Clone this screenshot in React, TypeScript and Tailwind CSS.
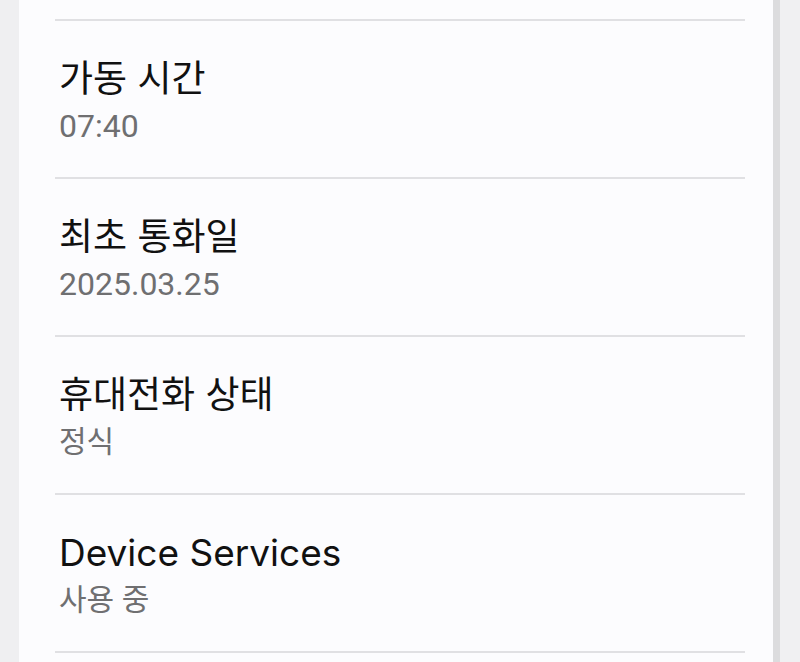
const rows = [
  { title: '가동 시간', value: '07:40', size: 'text-[32px]' },
  { title: '최초 통화일', value: '2025.03.25', size: 'text-[32px]' },
  { title: '휴대전화 상태', value: '정식', size: 'text-[30px]' },
  { title: 'Device Services', value: '사용 중', size: 'text-[30px]' },
];

export default function App() {
  return (
    <div className="flex h-[662px] w-[800px] overflow-hidden bg-[#f0f0f2]">
      <div className="w-[19px] shrink-0 bg-[#efeff1]" />
      <div className="flex w-[754px] shrink-0 flex-col bg-[#fcfcfe] pt-[19px]">
        {rows.map((r) => (
          <div key={r.title}>
            <div className="ml-[36px] mr-[28px] h-[2px] bg-[#e0e0e3]" />
            <div className="flex flex-col gap-[6px] pb-[32px] pl-[40px] pt-[36px]">
              <div className="font-['Inter','Noto_Sans_CJK_KR',sans-serif] text-[37px] leading-[44px] text-[#111111]">
                {r.title}
              </div>
              <div
                className={`font-['Roboto','Noto_Sans_CJK_KR',sans-serif] leading-[38px] text-[#6f6f71] ${r.size}`}
              >
                {r.value}
              </div>
            </div>
          </div>
        ))}
        <div className="ml-[36px] mr-[28px] h-[2px] bg-[#e0e0e3]" />
      </div>
      <div className="w-[7px] shrink-0 bg-[#dcdcde]" />
      <div className="flex-1 bg-[#f0f0f2]" />
    </div>
  );
}
